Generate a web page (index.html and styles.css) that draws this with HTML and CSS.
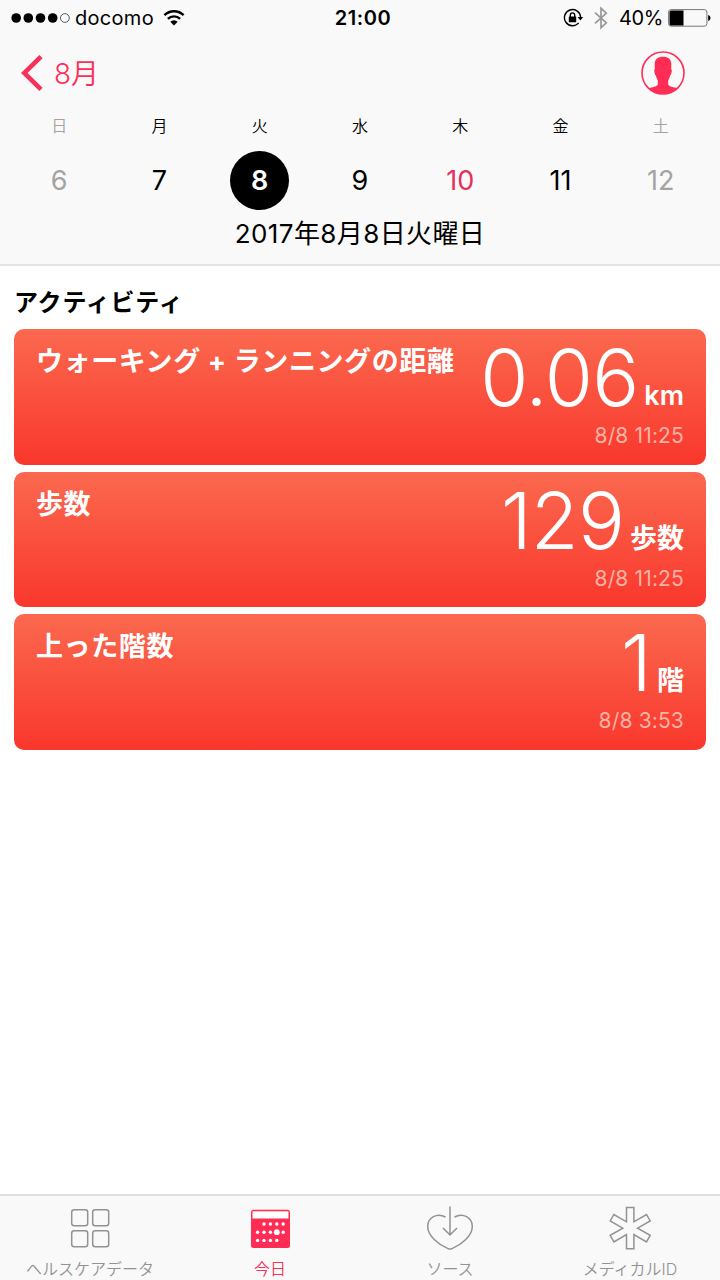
FILE: index.html
```
<!DOCTYPE html>
<html lang="ja">
<head>
  <meta charset="UTF-8" />
  <meta name="viewport" content="width=device-width, initial-scale=1.0"/>
  <title>ヘルスケア</title>
  <link rel="stylesheet" href="styles.css">
</head>
<body>
  <header class="header">
    <div class="status-bar">
      <div class="status-left">
        <svg class="signal" width="59" height="12" viewBox="0 0 59 12">
          <circle cx="5.2" cy="6" r="4.8"/>
          <circle cx="17.3" cy="6" r="4.8"/>
          <circle cx="29.5" cy="6" r="4.8"/>
          <circle cx="41.7" cy="6" r="4.8"/>
          <circle class="signal-off" cx="53.9" cy="6" r="4.4"/>
        </svg>
        <span class="carrier">docomo</span>
        <svg class="wifi" width="22" height="17" viewBox="0 0 22 17">
          <path class="wifi-arc" d="M1.4 6.2a13.7 13.7 0 0 1 19.2 0"/>
          <path class="wifi-arc" d="M4.9 9.9a8.7 8.7 0 0 1 12.2 0"/>
          <path d="M11 16.6l-3.7-3.8a5.3 5.3 0 0 1 7.4 0z"/>
        </svg>
      </div>
      <span class="clock">21:00</span>
      <div class="status-right">
        <svg class="lock" width="21" height="20" viewBox="0 0 21 20">
          <path class="lock-ring" d="M15.7 14.9a8.1 8.1 0 1 1 1.9-5.9"/>
          <path d="M14.6 9h5.6l-2.8 3.6z"/>
          <rect x="5.8" y="8.5" width="7.4" height="5.8" rx=".6"/>
          <path class="lock-ring" d="M7.3 9V7.1a2.2 2.2 0 0 1 4.4 0V9"/>
        </svg>
        <svg class="bluetooth" width="14" height="24" viewBox="0 0 14 24">
          <path d="M1 6.6l11.3 10.2L7 21.7V2.3l5.3 4.9L1 17.4"/>
        </svg>
        <span class="percent">40%</span>
        <svg class="battery" width="43" height="18" viewBox="0 0 43 18">
          <rect class="battery-case" x=".6" y=".6" width="38.3" height="16.6" rx="2.5"/>
          <path d="M3 1.5h12.5v15H3a1.5 1.5 0 0 1-1.5-1.5V3A1.5 1.5 0 0 1 3 1.5z"/>
          <path d="M40.2 6c3 1 3 5 0 6z"/>
        </svg>
      </div>
    </div>

    <div class="nav">
      <a class="back" href="#">
        <svg width="22" height="36" viewBox="0 0 22 36">
          <path d="M20 1.6L3.2 18 20 34.4"/>
        </svg>
        <span>8月</span>
      </a>
      <svg class="profile" width="44" height="44" viewBox="0 0 44 44">
        <circle class="profile-ring" cx="22" cy="22" r="21"/>
        <path d="M22 5.8C27 5.8 30.2 8 30.3 13L30.2 18.5C31 18.5 30.9 20.5 30.4 22C30 23.5 29.8 24.3 29.2 24.3C28.8 26.5 28 28 27.2 29.2V33.5C28.5 35.8 32.5 36.200 36.5 37.2A21 21 0 0 1 7.5 37.2C11.5 36.200 15.5 35.8 16.8 33.5V29.2C16 28 15.2 26.5 14.8 24.3C14.2 24.3 14 23.5 13.6 22C13.1 20.5 13 18.5 13.8 18.5L13.7 13C13.8 8 17 5.8 22 5.8z"/>
      </svg>
    </div>

    <div class="week">
      <div class="day weekend"><span class="name">日</span><span class="num">6</span></div>
      <div class="day"><span class="name">月</span><span class="num">7</span></div>
      <div class="day selected"><span class="name">火</span><span class="num">8</span></div>
      <div class="day"><span class="name">水</span><span class="num">9</span></div>
      <div class="day today"><span class="name">木</span><span class="num">10</span></div>
      <div class="day"><span class="name">金</span><span class="num">11</span></div>
      <div class="day weekend"><span class="name">土</span><span class="num">12</span></div>
    </div>
    <div class="full-date">2017年8月8日火曜日</div>
  </header>

  <main class="content">
    <h2>アクティビティ</h2>

    <div class="card">
      <div class="card-title">ウォーキング + ランニングの距離</div>
      <div class="card-data">
        <div class="reading"><span class="value">0.06</span><span class="unit">km</span></div>
        <div class="time">8/8 11:25</div>
      </div>
    </div>

    <div class="card">
      <div class="card-title">歩数</div>
      <div class="card-data">
        <div class="reading"><span class="value">129</span><span class="unit">歩数</span></div>
        <div class="time">8/8 11:25</div>
      </div>
    </div>

    <div class="card">
      <div class="card-title">上った階数</div>
      <div class="card-data">
        <div class="reading"><span class="value">1</span><span class="unit">階</span></div>
        <div class="time">8/8 3:53</div>
      </div>
    </div>
  </main>

  <nav class="tab-bar">
    <a class="tab" href="#">
      <svg width="48" height="46" viewBox="0 0 48 46">
        <rect x="5.7" y="4.7" width="16" height="16" rx="2.5"/>
        <rect x="26.7" y="4.7" width="16" height="16" rx="2.5"/>
        <rect x="5.7" y="25.7" width="16" height="16" rx="2.5"/>
        <rect x="26.7" y="25.7" width="16" height="16" rx="2.5"/>
      </svg>
      <span>ヘルスケアデータ</span>
    </a>
    <a class="tab active" href="#">
      <svg width="48" height="46" viewBox="0 0 48 46">
        <rect class="cal-body" x="5" y="4.8" width="39" height="38.2" rx="2.5"/>
        <rect class="cal-dot" x="6.5" y="6.3" width="36" height="7.2"/>
        <g class="cal-dot">
          <circle cx="18" cy="19" r="1.7"/><circle cx="24.4" cy="19" r="1.7"/><circle cx="30.8" cy="19" r="1.7"/><circle cx="37.2" cy="19" r="1.7"/>
          <circle cx="11.6" cy="27.2" r="1.7"/><circle cx="18" cy="27.2" r="1.7"/><circle cx="24.4" cy="27.2" r="1.7"/><circle cx="30.8" cy="27.2" r="2.9"/><circle cx="37.2" cy="27.2" r="1.7"/>
          <circle cx="11.6" cy="35.4" r="1.7"/><circle cx="18" cy="35.4" r="1.7"/><circle cx="24.4" cy="35.4" r="1.7"/><circle cx="30.8" cy="35.4" r="1.7"/>
        </g>
      </svg>
      <span>今日</span>
    </a>
    <a class="tab" href="#">
      <svg width="48" height="46" viewBox="0 0 48 46">
        <path d="M19.5 12C11 7.5 1.7 12.5 1.7 21.5C1.7 31 13 40 22 43.6Q24 44.6 26 43.6C35 40 46.3 31 46.3 21.5C46.3 12.5 37 7.5 28.5 12"/>
        <path d="M24 1.5v28.5M17 23l7 7 7-7"/>
      </svg>
      <span>ソース</span>
    </a>
    <a class="tab" href="#">
      <svg width="48" height="46" viewBox="0 0 48 46">
        <path transform="translate(24.2 23.2)" d="M-3.7-20.6H3.7V-6.4L16.3-13.7 20-7.2 7.4 0 20 7.2 16.3 13.7 3.7 6.4V20.6H-3.7V6.4L-16.3 13.7-20 7.2-7.4 0-20-7.2-16.3-13.7-3.7-6.4z"/>
      </svg>
      <span>メディカルID</span>
    </a>
  </nav>
</body>
</html>
```
FILE: styles.css
```
* {
  box-sizing: border-box;
}
body {
  font-family: Inter, "Noto Sans CJK JP", sans-serif;
  display: flex;
  flex-direction: column;
  height: 1280px;
  margin: 0;
  background: white;
  color: #000;
}
a {
  color: inherit;
  text-decoration: none;
}
svg {
  display: block;
  flex: none;
}

/* header */
.header {
  height: 266px;
  background: #f9f9f9;
  border-bottom: 2px solid #e4e4e5;
}
.status-bar {
  display: grid;
  grid-template-columns: 1fr auto 1fr;
  align-items: center;
  height: 36px;
  padding: 0 9px 0 11px;
  font-size: 20px;
  line-height: 36px;
}
.status-left,
.status-right {
  display: flex;
  align-items: center;
}
.status-right {
  justify-content: flex-end;
}
.signal-off {
  fill: none;
  stroke: #333;
  stroke-width: 0.8;
}
.carrier {
  margin-left: 5px;
  letter-spacing: 0.3px;
}
.wifi {
  margin: 0 0 2px 9px;
}
.wifi-arc {
  fill: none;
  stroke: #000;
  stroke-width: 2.4;
}
.clock {
  padding-left: 4px;
  font-weight: 600;
  letter-spacing: 0.6px;
}
.lock-ring {
  fill: none;
  stroke: #000;
  stroke-width: 1.4;
}
.bluetooth {
  margin: 0 11px 0 10px;
  fill: none;
  stroke: #999;
  stroke-width: 1.7;
}
.percent {
  letter-spacing: -0.4px;
}
.battery {
  margin-left: 5px;
}
.battery-case {
  fill: none;
  stroke: #777;
  stroke-width: 1;
}
.nav {
  display: flex;
  justify-content: space-between;
  align-items: center;
  height: 74px;
  padding: 0 35px 0 21px;
  color: #ff2d55;
}
.back {
  display: flex;
  align-items: center;
  gap: 11px;
  font-size: 28px;
  font-weight: 350;
}
.back span {
  padding-bottom: 3px;
}
.back svg {
  fill: none;
  stroke: #f5325a;
  stroke-width: 4.6;
}
.profile {
  fill: #ff2d55;
}
.profile-ring {
  fill: none;
  stroke: #ff2d55;
  stroke-width: 1.6;
}
.week {
  display: grid;
  grid-template-columns: repeat(7, 1fr);
  padding: 0 9px;
}
.day {
  display: flex;
  flex-direction: column;
  align-items: center;
}
.name {
  height: 41px;
  font-size: 16px;
  font-weight: 350;
  line-height: 32px;
}
.num {
  width: 59px;
  height: 59px;
  border-radius: 50%;
  font-size: 27px;
  line-height: 59px;
  text-align: center;
}
.weekend {
  color: #a3a3a3;
}
.today .num {
  color: #e62e5c;
}
.selected .num {
  background: #000;
  color: white;
  font-weight: 600;
}
.full-date {
  font-size: 26px;
  font-weight: 400;
  letter-spacing: 0.4px;
  line-height: 47px;
  text-align: center;
}

/* cards */
.content {
  flex: 1;
  padding: 0 14px;
}
.content h2 {
  height: 63px;
  margin: 0;
  font-size: 24px;
  font-weight: 700;
  letter-spacing: 0.8px;
  line-height: 74px;
}
.card {
  display: flex;
  justify-content: space-between;
  height: 135.5px;
  margin-bottom: 7px;
  padding: 0 22px;
  border-radius: 10px;
  background: linear-gradient(#fb694f, #f9372d);
  color: white;
}
.card-title {
  padding-top: 15px;
  font-size: 27px;
  font-weight: 700;
  letter-spacing: 0.6px;
  line-height: 36px;
  white-space: nowrap;
}
.card-data {
  text-align: right;
  white-space: nowrap;
}
.reading {
  height: 92px;
  line-height: 98px;
}
.value {
  font-size: 78px;
  font-weight: 275;
  letter-spacing: -0.8px;
}
.unit {
  position: relative;
  top: -1px;
  margin-left: 6px;
  font-size: 27px;
  font-weight: 600;
}
.time {
  color: #ffb3a5;
  font-size: 21px;
  letter-spacing: 0.15px;
  line-height: 30px;
}

/* tab bar */
.tab-bar {
  display: grid;
  grid-template-columns: repeat(4, 1fr);
  height: 86px;
  background: #f9f9f9;
  border-top: 2px solid #e0e0e0;
}
.tab {
  display: flex;
  flex-direction: column;
  align-items: center;
  padding-top: 9px;
  color: #929292;
  font-size: 16px;
  font-weight: 350;
  line-height: 36px;
}
.tab svg {
  fill: none;
  stroke: #929292;
  stroke-width: 1.5;
}
.tab.active {
  color: #f5325a;
}
.tab .cal-body {
  fill: #ff2d55;
  stroke: none;
}
.tab .cal-dot {
  fill: #fff;
  stroke: none;
}
```
